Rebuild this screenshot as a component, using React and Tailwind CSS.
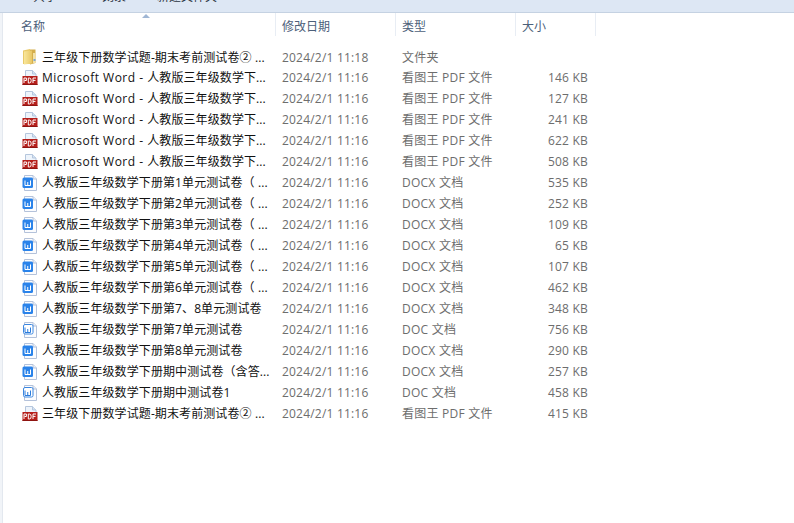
const PDF = 'pdf', W = 'w', D = 'doc';
const rows = [
  ['folder', '三年级下册数学试题-期末考前测试卷② ...', '2024/2/1 11:18', '文件夹', ''],
  [PDF, '人教版三年级数学下...', '2024/2/1 11:16', '看图王 PDF 文件', '146 KB', true],
  [PDF, '人教版三年级数学下...', '2024/2/1 11:16', '看图王 PDF 文件', '127 KB', true],
  [PDF, '人教版三年级数学下...', '2024/2/1 11:16', '看图王 PDF 文件', '241 KB', true],
  [PDF, '人教版三年级数学下...', '2024/2/1 11:16', '看图王 PDF 文件', '622 KB', true],
  [PDF, '人教版三年级数学下...', '2024/2/1 11:16', '看图王 PDF 文件', '508 KB', true],
  [W, '人教版三年级数学下册第1单元测试卷（ ...', '2024/2/1 11:16', 'DOCX 文档', '535 KB'],
  [W, '人教版三年级数学下册第2单元测试卷（ ...', '2024/2/1 11:16', 'DOCX 文档', '252 KB'],
  [W, '人教版三年级数学下册第3单元测试卷（ ...', '2024/2/1 11:16', 'DOCX 文档', '109 KB'],
  [W, '人教版三年级数学下册第4单元测试卷（ ...', '2024/2/1 11:16', 'DOCX 文档', '65 KB'],
  [W, '人教版三年级数学下册第5单元测试卷（ ...', '2024/2/1 11:16', 'DOCX 文档', '107 KB'],
  [W, '人教版三年级数学下册第6单元测试卷（ ...', '2024/2/1 11:16', 'DOCX 文档', '462 KB'],
  [W, '人教版三年级数学下册第7、8单元测试卷', '2024/2/1 11:16', 'DOCX 文档', '348 KB'],
  [D, '人教版三年级数学下册第7单元测试卷', '2024/2/1 11:16', 'DOC 文档', '756 KB'],
  [W, '人教版三年级数学下册第8单元测试卷', '2024/2/1 11:16', 'DOCX 文档', '290 KB'],
  [W, '人教版三年级数学下册期中测试卷（含答...', '2024/2/1 11:16', 'DOCX 文档', '257 KB'],
  [D, '人教版三年级数学下册期中测试卷1', '2024/2/1 11:16', 'DOC 文档', '458 KB'],
  [PDF, '三年级下册数学试题-期末考前测试卷② ...', '2024/2/1 11:16', '看图王 PDF 文件', '415 KB'],
];

function Icon({ type }) {
  if (type === 'folder') {
    return (
      <svg width="16" height="18" viewBox="0 0 16 18" className="shrink-0">
        <defs>
          <linearGradient id="fg" x1="0" x2="1" y1="0" y2="0">
            <stop offset="0" stopColor="#f9e79c" />
            <stop offset="1" stopColor="#e8c765" />
          </linearGradient>
        </defs>
        <path d="M1 2.5 L8 1 L8 16 L1 16 Z" fill="#e9ca6a" />
        <path d="M8 1.5 H13.5 V15 L8 16.5 Z" fill="#d4ae4c" />
        <path d="M2 3.5 L10 2.5 L10 15.5 L2 16.5 Z" fill="url(#fg)" />
        <rect x="11" y="5" width="2.5" height="10" fill="#f3e2a8" />
        <rect x="11.5" y="11" width="2" height="2" fill="#7ea6cf" />
      </svg>
    );
  }
  if (type === 'pdf') {
    return (
      <svg width="16" height="16" viewBox="0 0 16 16" className="shrink-0">
        <path d="M3.5 0.5 H10.5 L14 4 V11 H3.5 Z" fill="#eef4fb" stroke="#b5c6dd" />
        <path d="M10.5 0.5 V4 H14" fill="#d6e4f3" stroke="#b5c6dd" />
        <rect x="0.5" y="6" width="15" height="9" fill="#b5201c" />
        <rect x="0.5" y="14" width="15" height="1" fill="#8e1411" />
        <path d="M2 13 V8 H4.4 V10.5 H2.5 M6.3 8 V13 H7.3 Q9.2 13 9.2 10.5 Q9.2 8 7.3 8 H6.3 M11 13 V8 H14 M11 10.4 H13.5" fill="none" stroke="#fff" strokeWidth="1" />
      </svg>
    );
  }
  const solid = type === 'w';
  return (
    <svg width="16" height="16" viewBox="0 0 16 16" className="shrink-0">
      <path d="M2.5 0.5 H11 L14.5 4 V15.5 H2.5 Z" fill="#fbfcfe" stroke="#b4c2da" />
      <path d="M11 0.5 V4 H14.5" fill="#e9eff7" stroke="#b4c2da" />
      <rect x={solid ? 0.5 : 1.5} y="2.5" width={solid ? 10.5 : 9.5} height={solid ? 10.5 : 9.5} rx="1.5" fill={solid ? '#2a83ea' : '#fff'} stroke={solid ? 'none' : '#3b86e0'} />
      <path d="M3 5.5 V10.5 H8.5 V5.5 M5.75 7 V10.5" fill="none" stroke={solid ? '#fff' : '#2a7bdb'} strokeWidth="1" />
    </svg>
  );
}

function Head({ w, children }) {
  return (
    <div className={`${w} h-[23px] pt-[3px] pl-[6px] flex items-center border-r border-[#e8edf4] text-[#4c607a]`}>
      {children}
    </div>
  );
}

export default function App() {
  return (
    <div className="w-[794px] h-[523px] overflow-hidden bg-white text-[12px] leading-[21px]" style={{ fontFamily: '"Open Sans", "Noto Sans CJK SC", sans-serif' }}>
      <div className="h-[13px] overflow-hidden bg-[#dde7f4] border-b border-[#c5d2e2] text-[#2a3442]">
        <div className="flex mt-[-13px] leading-[20px] pl-[33px]">
          <span className="w-[69px]">共享</span>
          <span className="w-[55px]">刻录</span>
          <span>新建文件夹</span>
        </div>
      </div>
      <div className="flex h-[510px]">
        <div className="w-[3px] bg-[#f1f4f8] border-r border-[#e3e8ef]"></div>
        <div className="flex-1 relative">
          <div className="absolute left-[139px] top-[1px] w-0 h-0 border-x-[4px] border-x-transparent border-b-[4px] border-b-[#9fb6d4]"></div>
          <div className="flex">
            <Head w="w-[273px]"><span className="pl-[12px]">名称</span></Head>
            <Head w="w-[120px]">修改日期</Head>
            <Head w="w-[120px]">类型</Head>
            <Head w="w-[80px]">大小</Head>
          </div>
          <div className="pt-[11px]">
            {rows.map((r, i) => (
              <div key={i} className={`flex items-center ${i === 0 ? 'h-[20px]' : 'h-[21px]'}`}>
                <div className="w-[273px] flex items-center pl-[19px] gap-[4px] text-[#111]">
                  <Icon type={r[0]} />
                  <span className="whitespace-pre tracking-[0.1px]">
                    {r[5] ? <span className="tracking-[0.5px]">{'Microsoft Word - '}</span> : null}
                    {r[1]}
                  </span>
                </div>
                <div className="w-[120px] pl-[6px] text-[#6d6d6d] tracking-[0.2px]">{r[2]}</div>
                <div className="w-[113px] pl-[6px] text-[#6d6d6d] tracking-[0.25px]">{r[3]}</div>
                <div className="w-[79px] text-right text-[#6d6d6d] tracking-[0.2px]">{r[4]}</div>
              </div>
            ))}
          </div>
        </div>
      </div>
    </div>
  );
}
